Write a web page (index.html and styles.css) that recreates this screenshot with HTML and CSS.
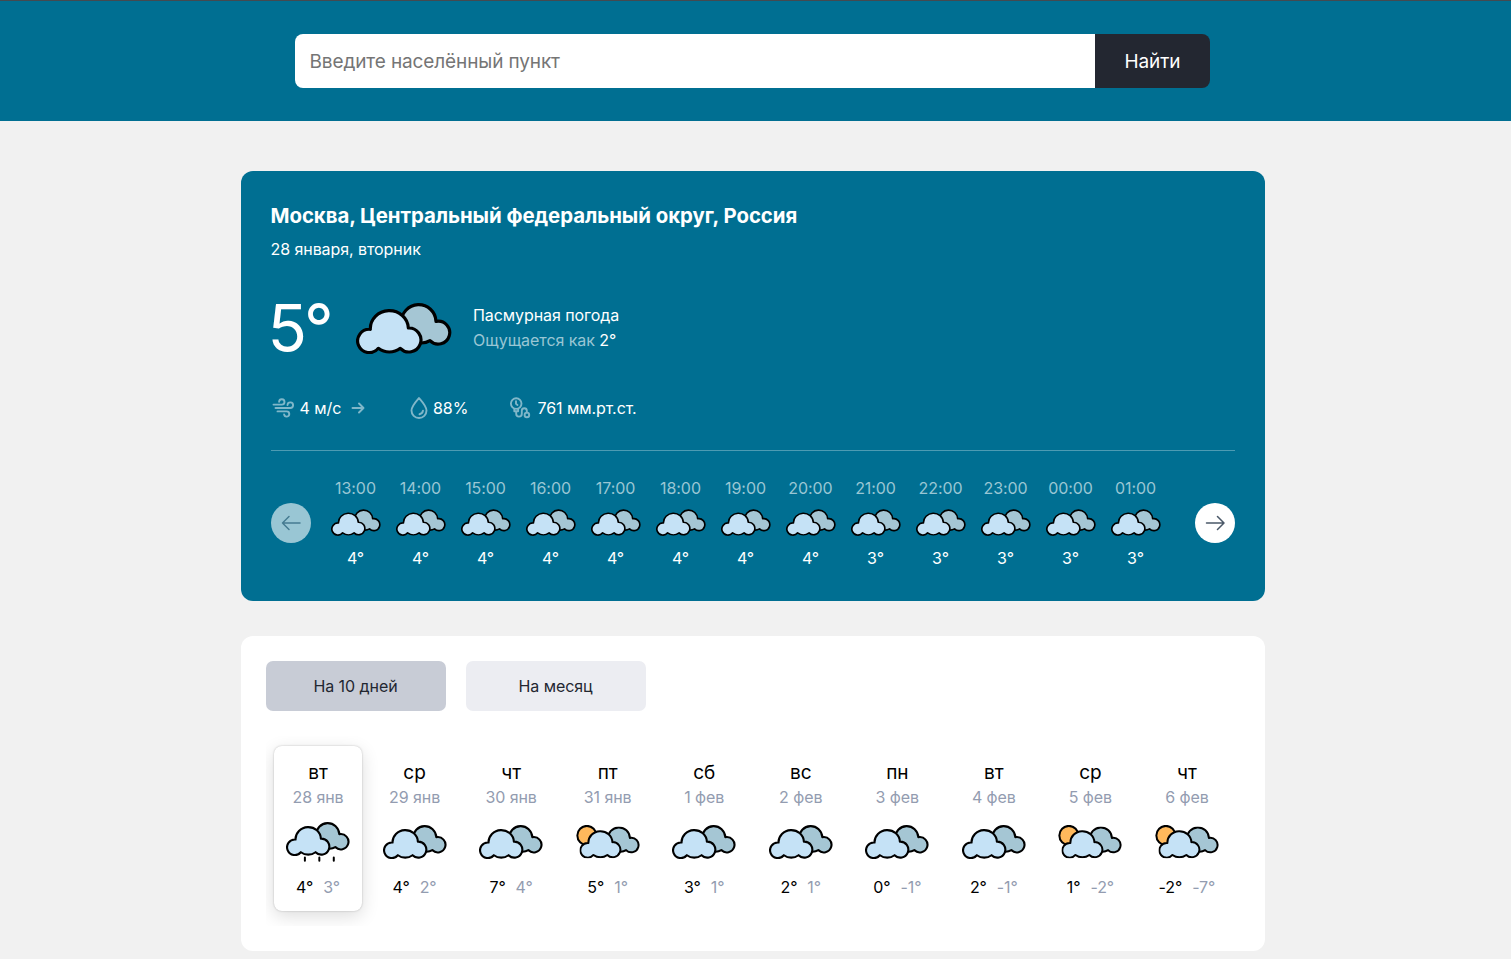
FILE: index.html
```html
<!DOCTYPE html>
<html lang="ru">
<head>
<meta charset="utf-8">
<title>Погода</title>
<link rel="stylesheet" href="styles.css">
</head>
<body>
<svg class="sprite" aria-hidden="true">
  <symbol id="clouds" viewBox="45 37 288 153">
    <g stroke="#000" stroke-width="9.500" stroke-linejoin="round">
      <path fill="#a5c6d4" d="M181 96A52 52 0 0 1 285 92A34.500 34.500 0 1 1 267 150Q254 158 238 157L190 150Z"/>
      <path fill="#c5e2f6" d="M88 116A57 54 0 0 1 202 112A36 36 0 1 1 178 173A55 55 0 0 1 112 173A35 35 0 1 1 88 116Z"/>
    </g>
  </symbol>
  <symbol id="sunny" viewBox="45 37 288 153">
    <circle cx="94" cy="84" r="43" fill="#ffb95c" stroke="#000" stroke-width="9"/>
    <svg x="60" y="43" width="273" height="145" viewBox="45 37 288 153"><use href="#clouds" x="45" y="37" width="288" height="153"/></svg>
  </symbol>
  <symbol id="rain" viewBox="45 37 288 180">
    <use href="#clouds" x="45" y="37" width="288" height="153"/>
    <path d="M130 197v14M195 197v14M260 197v14" stroke="#000" stroke-width="9" stroke-linecap="round"/>
  </symbol>
</svg>
<header class="header">
  <form class="search">
    <input class="search-input" type="text" placeholder="Введите населённый пункт">
    <button class="search-button" type="button">Найти</button>
  </form>
</header>
<main class="container">
  <section class="current">
    <h1 class="city">Москва, Центральный федеральный округ, Россия</h1>
    <p class="date">28 января, вторник</p>
    <div class="now">
      <div class="temp">5°</div>
      <svg class="now-icon"><use href="#clouds"/></svg>
      <div class="summary">
        <p>Пасмурная погода</p>
        <p><span class="muted">Ощущается как</span> 2°</p>
      </div>
    </div>
    <div class="details">
      <div class="wind">
        <svg class="icon" width="24" height="24" viewBox="0 0 24 24"><path d="M2.500 8.600h8.300a2.700 2.700 0 1 0-2.700-2.900M4.500 12h14.800a2.800 2.800 0 1 0-2.800-3M6.500 15.400h9.200a2.600 2.600 0 1 1-2.600 3"/></svg>
        <span>4 м/с</span>
        <svg class="icon arrow" width="14" height="14" viewBox="0 0 14 14"><path d="M1.500 7h11M8 2.500L12.500 7L8 11.500"/></svg>
      </div>
      <div class="humidity">
        <svg class="icon" width="24" height="24" viewBox="0 0 24 24"><path d="M12 2C9 5.500 4.500 10 4.500 14.500a7.500 7.500 0 0 0 15 0C19.500 10 15 5.500 12 2ZM16 14.700c-.3 1.900-1.600 3.200-3.500 3.600"/></svg>
        <span>88%</span>
      </div>
      <div class="pressure">
        <svg class="icon" width="24" height="24" viewBox="0 0 24 24"><circle cx="8.200" cy="7.600" r="5.300"/><path d="M8 5.200v2.600l1.500 1.200M6.300 13v2.300h3.800V13M8.200 15.400v2.400a2.800 2.800 0 0 0 5.600 0v-3a2.500 2.500 0 0 1 5 0v1.800"/><circle cx="18.900" cy="18.900" r="2.300"/></svg>
        <span>761 мм.рт.ст.</span>
      </div>
    </div>
    <div class="hourly">
      <button class="nav nav-disabled" type="button" aria-label="Назад"><svg width="20" height="16" viewBox="0 0 20 16"><path d="M19 8H1.500M8 1.500L1.500 8L8 14.500"/></svg></button>
      <div class="hours" id="hours"></div>
      <button class="nav" type="button" aria-label="Вперёд"><svg width="20" height="16" viewBox="0 0 20 16"><path d="M1.500 8h17M12.500 1.500L19 8L12.500 14.500"/></svg></button>
    </div>
  </section>
  <section class="forecast">
    <div class="tabs">
      <button class="tab tab-active" type="button">На 10 дней</button>
      <button class="tab" type="button">На месяц</button>
    </div>
    <div class="days" id="days"></div>
  </section>
</main>
<script src="script.js"></script>
</body>
</html>
```
FILE: styles.css
```css
* { box-sizing: border-box; }
body { margin: 0; background: #f1f1f1; font: 16px/20px Inter, sans-serif; letter-spacing: -.07px; height: 959px; overflow: hidden; }
button, input { font: inherit; letter-spacing: inherit; border: 0; }
h1, p { margin: 0; }
.sprite { display: block; width: 0; height: 0; }
.header { height: 121px; border-top: 1px solid #444a50; background: #006f92; padding: 33px 6px 0 0; }
.search { display: flex; width: 915px; height: 54px; margin: 0 auto; }
.search-input { flex: 1; min-width: 0; background: #fff; border-radius: 8px 0 0 8px; padding: 1px 14.5px 0; font-size: 19px; letter-spacing: -.12px; outline: 0; }
.search-input::placeholder { color: #757575; }
.search-button { width: 115px; background: #232731; color: #fff; border-radius: 0 8px 8px 0; font-size: 19px; padding: 2px 0 0; }
.container { width: 1024px; margin: 50px 0 0 241px; }
.current { height: 430px; background: #006f92; border-radius: 12px; color: #fff; padding: 33px 30px 0; }
.city { margin-left: -.5px; font-size: 20.4px; line-height: 24px; font-weight: 700; letter-spacing: -.05px; }
.date { margin-top: 11px; margin-left: -.5px; }
.now { display: flex; align-items: center; height: 80px; margin-top: 29px; }
.temp { width: 88px; margin-left: -3.5px; font-size: 65px; line-height: 80px; letter-spacing: -3px; }
.now-icon { width: 96px; height: 51px; }
.summary { margin-left: 21.5px; line-height: 25px; }
.muted { color: #99c6d4; }
.details { display: flex; height: 24px; margin-top: 28px; align-items: center; }
.details > div { display: flex; align-items: center; }
.icon { display: block; fill: none; stroke: #80b7c9; stroke-width: 1.9; stroke-linecap: round; stroke-linejoin: round; }
.wind { width: 136px; gap: 4.5px; }
.wind .arrow { margin-left: 5px; }
.humidity { width: 101px; gap: 2px; }
.pressure { gap: 5.5px; }
.hourly { display: flex; margin-top: 30px; border-top: 1px solid #4d9bb3; padding-top: 27px; }
.nav { display: grid; place-items: center; width: 40px; height: 40px; margin-top: 25px; padding: 0; border-radius: 50%; background: #fff; }
.nav svg { fill: none; stroke: #4a5868; stroke-width: 1.5; stroke-linecap: round; stroke-linejoin: round; }
.nav-disabled { background: #99c6d4; }
.nav-disabled svg { stroke: #457b91; }
.hours { display: flex; flex: 1; padding-left: 12px; }
.hour { width: 65px; display: flex; flex-direction: column; align-items: center; }
.hour-time { color: #99c6d4; }
.hour-icon { width: 50px; height: 27px; margin: 11px 0 12px; }
.forecast { height: 315px; margin-top: 35px; padding: 25px; background: #fff; border-radius: 12px; }
.tabs { display: flex; gap: 20px; }
.tab { width: 180px; height: 50px; padding: 0 1px 0 0; border-radius: 7px; background: #ecedf2; color: #232731; }
.tab-active { background: #c8ccd6; }
.days { display: flex; justify-content: space-between; height: 190px; margin-top: 25px; padding: 10px 9px 0 8px; overflow: hidden; }
.day { width: 88px; height: 165px; padding-top: 15px; border-radius: 8px; display: flex; flex-direction: column; align-items: center; }
.day-active { box-shadow: 0 0 2px rgba(0,0,0,.25), 0 5px 18px rgba(0,0,0,.14); }
.day-name { font-size: 19px; line-height: 24px; }
.day-date { margin-top: 2px; color: #939cb0; }
.day-icon { width: 64px; height: 34px; margin: 18px 0; }
.day-icon-rain { height: 40px; margin: 15px 0; }
.day-temps { display: flex; gap: 10px; }
.day-night { color: #939cb0; }
```
FILE: script.js
```js
const hours = [['13:00',4],['14:00',4],['15:00',4],['16:00',4],['17:00',4],['18:00',4],['19:00',4],['20:00',4],['21:00',3],['22:00',3],['23:00',3],['00:00',3],['01:00',3]];
document.getElementById('hours').innerHTML = hours.map(([time, t]) =>
  `<div class="hour"><span class="hour-time">${time}</span><svg class="hour-icon"><use href="#clouds"/></svg><span>${t}°</span></div>`).join('');

const days = [['вт','28 янв','rain',4,3],['ср','29 янв','clouds',4,2],['чт','30 янв','clouds',7,4],['пт','31 янв','sunny',5,1],['сб','1 фев','clouds',3,1],['вс','2 фев','clouds',2,1],['пн','3 фев','clouds',0,-1],['вт','4 фев','clouds',2,-1],['ср','5 фев','sunny',1,-2],['чт','6 фев','sunny',-2,-7]];
document.getElementById('days').innerHTML = days.map(([name, date, icon, hi, lo], i) =>
  `<div class="day${i ? '' : ' day-active'}"><span class="day-name">${name}</span><span class="day-date">${date}</span><svg class="day-icon day-icon-${icon}"><use href="#${icon}"/></svg><div class="day-temps"><span>${hi}°</span><span class="day-night">${lo}°</span></div></div>`).join('');
```
